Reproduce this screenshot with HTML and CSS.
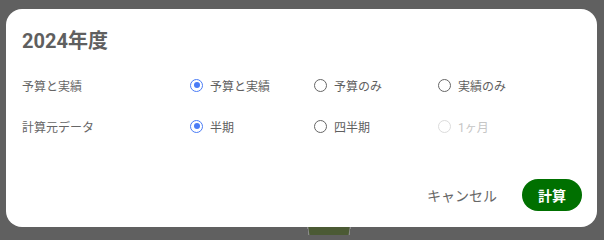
FILE: index.html
```html
<!DOCTYPE html>
<html lang="ja">
<head>
<meta charset="utf-8">
<link rel="stylesheet" href="styles.css">
</head>
<body>
<div class="backdrop">
  <div class="bg-shape"></div>
  <div class="dialog">
    <h1 class="title">2024年度</h1>
    <div class="form">
      <div class="row">
        <div class="row-label">予算と実績</div>
        <label class="opt"><span class="radio checked"></span>予算と実績</label>
        <label class="opt"><span class="radio"></span>予算のみ</label>
        <label class="opt"><span class="radio"></span>実績のみ</label>
      </div>
      <div class="row">
        <div class="row-label">計算元データ</div>
        <label class="opt"><span class="radio checked"></span>半期</label>
        <label class="opt"><span class="radio"></span>四半期</label>
        <label class="opt disabled"><span class="radio"></span>1ヶ月</label>
      </div>
    </div>
    <div class="actions">
      <button class="btn-text">キャンセル</button>
      <button class="btn-primary">計算</button>
    </div>
  </div>
</div>
</body>
</html>
```
FILE: styles.css
```css
html, body {
  margin: 0;
  padding: 0;
}
body {
  width: 604px;
  height: 235px;
  overflow: hidden;
  font-family: Roboto, "Noto Sans CJK JP", sans-serif;
  background: #606060;
}
.backdrop {
  position: relative;
  width: 604px;
  height: 235px;
  padding: 9px 7px 0 6px;
  box-sizing: border-box;
}
.bg-shape {
  position: absolute;
  left: 308px;
  top: 226px;
  width: 40px;
  height: 12px;
  background: #4b5a34;
  border-left: 1px solid #8a8a8a;
  border-right: 1px solid #8a8a8a;
  transform: perspective(20px) rotateX(-8deg);
}
.dialog {
  position: relative;
  background: #fff;
  border-radius: 16px;
  height: 218px;
  box-sizing: border-box;
  padding: 20px 15px 16px 16px;
  display: flex;
  flex-direction: column;
}
.title {
  margin: 0;
  font-size: 20px;
  line-height: 24px;
  font-weight: 700;
  color: #5f5f5f;
}
.form {
  margin-top: 20px;
  display: flex;
  flex-direction: column;
  gap: 17px;
}
.row {
  display: grid;
  grid-template-columns: 168px 124px 124px 124px;
  align-items: center;
  height: 24px;
}
.row-label {
  font-size: 12px;
  color: #666;
}
.opt {
  display: flex;
  align-items: center;
  gap: 7px;
  font-size: 12px;
  color: #5f5f5f;
}
.opt.disabled {
  color: #c6c6c6;
}
.radio {
  width: 13px;
  height: 13px;
  box-sizing: border-box;
  border: 1.5px solid #666;
  border-radius: 50%;
  display: flex;
  align-items: center;
  justify-content: center;
}
.radio.checked {
  border-color: #4a7cf6;
}
.radio.checked::after {
  content: "";
  width: 6px;
  height: 6px;
  border-radius: 50%;
  background: #4a7cf6;
}
.opt.disabled .radio {
  border-color: #dcdcdc;
}
.actions {
  margin-top: auto;
  display: flex;
  justify-content: flex-end;
  align-items: center;
  gap: 25px;
}
button {
  font-family: Roboto, "Noto Sans CJK JP", sans-serif;
  border: none;
  cursor: pointer;
}
.btn-text {
  background: none;
  padding: 0;
  font-size: 14px;
  color: #666;
}
.btn-primary {
  background: #007000;
  color: #fff;
  font-size: 14px;
  font-weight: 700;
  height: 32px;
  padding: 0 16px;
  border-radius: 16px;
}
```
